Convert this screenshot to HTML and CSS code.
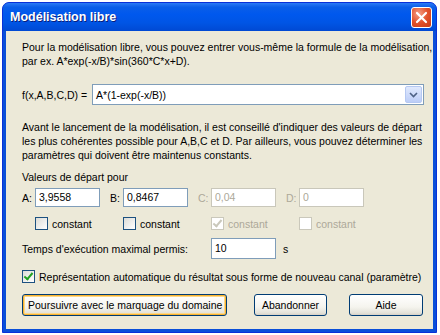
FILE: index.html
```html
<!DOCTYPE html>
<html lang="fr">
<head>
    <meta charset="UTF-8">
    <title>Modélisation libre</title>
    <link rel="stylesheet" href="styles.css">
</head>
<body>
    <div class="window">
        <div class="titlebar">
            <span class="title">Modélisation libre</span>
            <button class="close-button">
                <svg width="13" height="13" viewBox="0 0 13 13">
                    <path d="M2 2 L11 11 M11 2 L2 11" stroke="#ffffff" stroke-width="2.2" stroke-linecap="round"/>
                </svg>
            </button>
        </div>

        <div class="content">
            <p class="text">Pour la modélisation libre, vous pouvez entrer vous-même la formule de la modélisation,<br>par ex. A*exp(-x/B)*sin(360*C*x+D).</p>

            <div class="formula-row">
                <span class="label">f(x,A,B,C,D) =</span>
                <div class="combo">
                    <span class="combo-value">A*(1-exp(-x/B))</span>
                    <span class="combo-button">
                        <svg width="9" height="6" viewBox="0 0 9 6">
                            <path d="M1 1 L4.5 4.5 L8 1" stroke="#4d6185" stroke-width="1.6" fill="none"/>
                        </svg>
                    </span>
                </div>
            </div>

            <p class="text">Avant le lancement de la modélisation, il est conseillé d'indiquer des valeurs de départ<br>les plus cohérentes possible pour A,B,C et D. Par ailleurs, vous pouvez déterminer les<br>paramètres qui doivent être maintenus constants.</p>

            <p class="text">Valeurs de départ pour</p>

            <div class="params">
                <div class="param">
                    <div class="param-input">
                        <span class="param-name">A:</span>
                        <span class="field">3,9558</span>
                    </div>
                    <label class="check"><span class="box"></span>constant</label>
                </div>
                <div class="param">
                    <div class="param-input">
                        <span class="param-name">B:</span>
                        <span class="field">0,8467</span>
                    </div>
                    <label class="check"><span class="box"></span>constant</label>
                </div>
                <div class="param disabled">
                    <div class="param-input">
                        <span class="param-name">C:</span>
                        <span class="field">0,04</span>
                    </div>
                    <label class="check"><span class="box checked"></span>constant</label>
                </div>
                <div class="param disabled">
                    <div class="param-input">
                        <span class="param-name">D:</span>
                        <span class="field">0</span>
                    </div>
                    <label class="check"><span class="box"></span>constant</label>
                </div>
            </div>

            <div class="time-row">
                <span class="label">Temps d'exécution maximal permis:</span>
                <span class="field time-field">10</span>
                <span class="unit">s</span>
            </div>

            <label class="check auto-check"><span class="box checked"></span>Représentation automatique du résultat sous forme de nouveau canal (paramètre)</label>

            <div class="buttons">
                <button class="btn default">Poursuivre avec le marquage du domaine</button>
                <button class="btn cancel">Abandonner</button>
                <button class="btn help">Aide</button>
            </div>
        </div>
    </div>
</body>
</html>
```
FILE: styles.css
```css
body {
    margin: 0;
    padding: 2px 3px 0 2px;
    background: #ffffff;
    font-family: 'Liberation Sans', Arial, sans-serif;
    font-size: 10.5px;
    color: #000000;
    white-space: nowrap;
}

.window {
    width: 435px;
    height: 331px;
    box-sizing: border-box;
    background: #0a4fd8;
    border: 1px solid #0831d9;
    border-radius: 7px 7px 0 0;
    display: flex;
    flex-direction: column;
}

.titlebar {
    height: 28px;
    flex-shrink: 0;
    display: flex;
    align-items: center;
    justify-content: space-between;
    padding: 0 4px 0 7px;
    border-radius: 6px 6px 0 0;
    background: linear-gradient(#2b7af5 0%, #0a5ee8 15%, #0058ee 40%, #0055e5 70%, #0049d3 100%);
}

.title {
    color: #ffffff;
    font-family: 'Liberation Sans', sans-serif;
    font-weight: bold;
    font-size: 12.5px;
    text-shadow: 1px 1px #0a1e7a;
}

.close-button {
    width: 21px;
    height: 21px;
    padding: 0;
    border: 1px solid #ffffff;
    border-radius: 3px;
    background: radial-gradient(circle at 35% 30%, #f4a088 0%, #e2512b 50%, #c53b16 100%);
    display: flex;
    align-items: center;
    justify-content: center;
}

.content {
    flex: 1;
    margin: 0 3px 3px 3px;
    background: #ece9d8;
    padding: 9px 6px 0 16px;
}

.text {
    margin: 0;
    line-height: 14px;
}

.formula-row {
    display: flex;
    align-items: center;
    gap: 5px;
    margin: 16px 3px 15px 0;
}

.combo {
    flex: 1;
    height: 21px;
    box-sizing: border-box;
    border: 1px solid #7f9db9;
    background: #ffffff;
    display: flex;
    align-items: center;
    justify-content: space-between;
    padding: 0 1px 0 3px;
}

.combo-button {
    width: 17px;
    height: 17px;
    box-sizing: border-box;
    border: 1px solid #b5c8f2;
    border-radius: 2px;
    background: linear-gradient(#e0e9fd, #bccdf7);
    display: flex;
    align-items: center;
    justify-content: center;
}

.text + .text {
    margin-top: 8px;
}

.params {
    display: flex;
    gap: 10px;
    margin-top: 4px;
}

.param {
    display: flex;
    flex-direction: column;
    gap: 9px;
}

.param-input {
    display: flex;
    align-items: center;
    gap: 3px;
}

.param-name {
    width: 10px;
}

.field {
    width: 65px;
    height: 19px;
    box-sizing: border-box;
    border: 1px solid #7f9db9;
    background: #ffffff;
    padding: 0 3px;
    line-height: 17px;
}

.param .check {
    margin-left: 13px;
}

.check {
    display: flex;
    align-items: center;
    gap: 4px;
    height: 15px;
}

.box {
    width: 13px;
    height: 13px;
    box-sizing: border-box;
    border: 1px solid #1c5180;
    background: linear-gradient(135deg, #dcdcd7, #ffffff);
    position: relative;
}

.box.checked::after {
    content: "";
    position: absolute;
    left: 3px;
    top: 0px;
    width: 3px;
    height: 7px;
    border: solid #21a121;
    border-width: 0 2px 2px 0;
    transform: rotate(40deg);
}

.disabled .param-name,
.disabled .field,
.disabled .check {
    color: #aca899;
}

.disabled .field {
    border-color: #c9c7ba;
}

.disabled .box {
    border-color: #cac8bb;
    background: #ffffff;
}

.disabled .box.checked::after {
    border-color: #cac8bb;
}

.time-row {
    display: flex;
    align-items: center;
    margin-top: 7px;
}

.time-row .label {
    width: 189px;
}

.time-field {
    height: 21px;
    line-height: 19px;
}

.unit {
    margin-left: 7px;
}

.auto-check {
    margin-top: 10px;
}

.buttons {
    display: flex;
    margin-top: 10px;
}

.btn {
    height: 22px;
    padding: 0 5px;
    font-family: inherit;
    font-size: 10.5px;
    color: #000000;
    border: 1px solid #003c74;
    border-radius: 3px;
    background: linear-gradient(#ffffff 0%, #f5f4ee 60%, #e3e2d9 90%, #d6d0c5 100%);
}

.btn.default {
    box-shadow: inset 0 0 0 1px #f8b330, inset 0 0 0 2px #fdd889;
    width: 205px;
}

.btn.cancel {
    width: 73px;
    margin-left: 27px;
}

.btn.help {
    width: 74px;
    margin-left: 22px;
}
```
